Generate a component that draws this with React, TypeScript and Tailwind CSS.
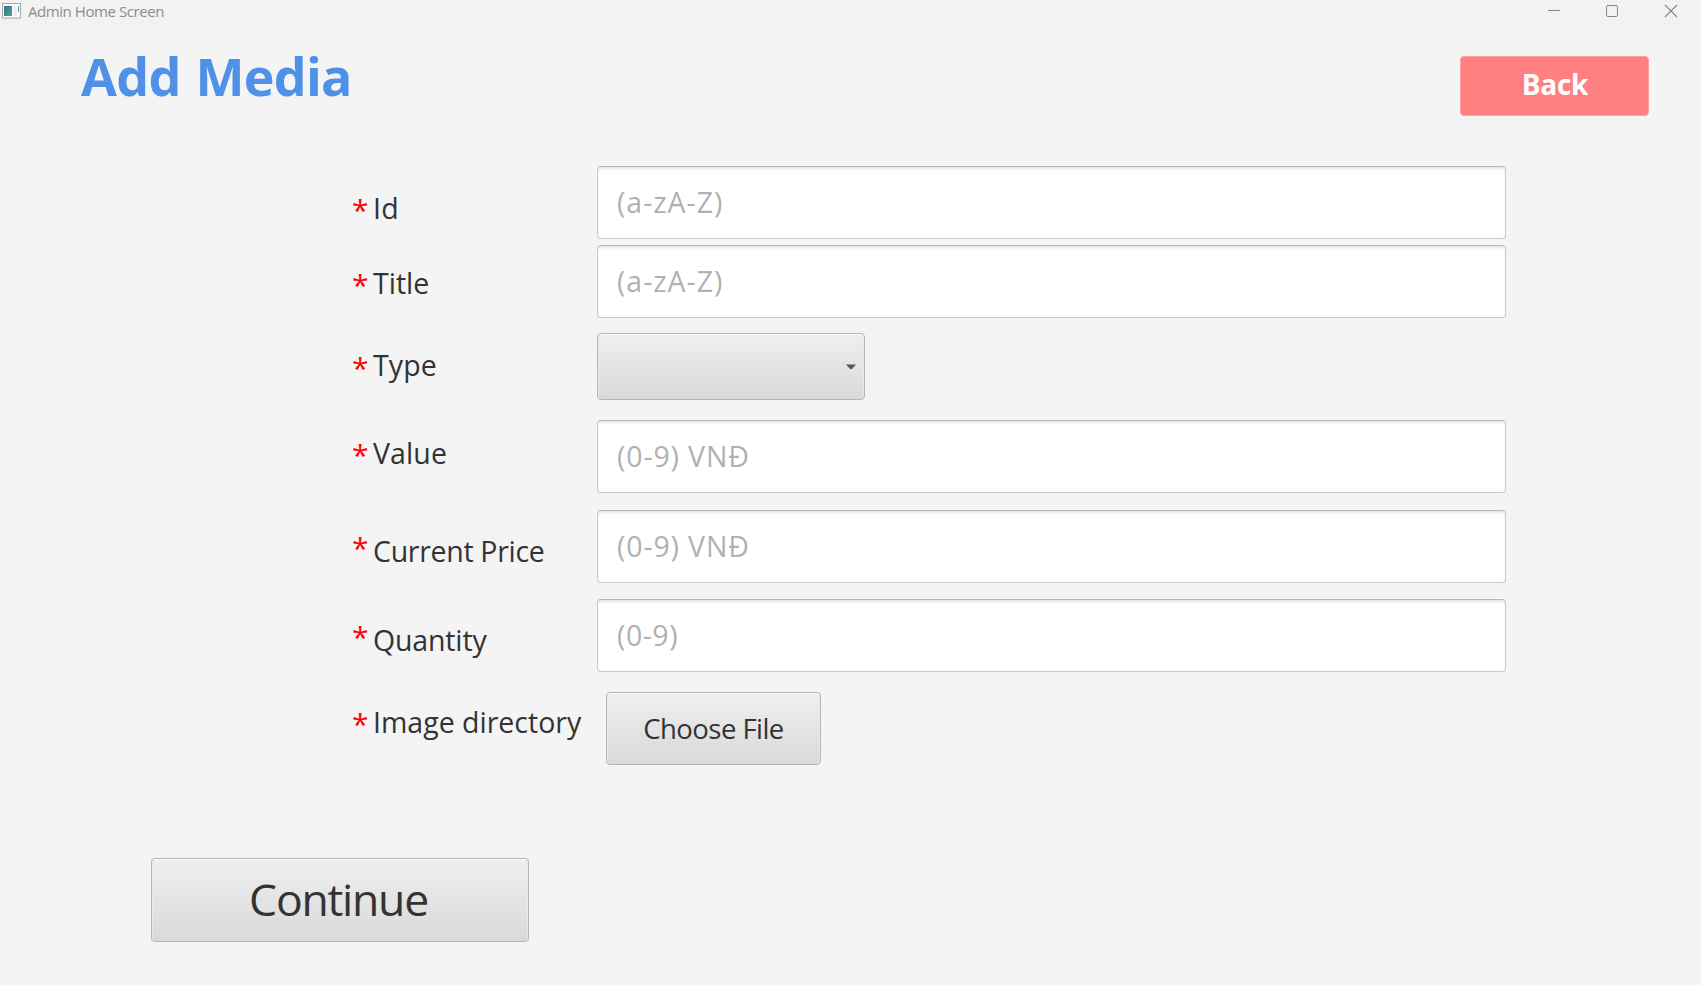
type Row = {
  label: string;
  placeholder?: string;
  kind: "text" | "select" | "file";
  row: string;
  star: string;
  text: string;
  hint?: string;
};

const rows: Row[] = [
  { label: "Id", placeholder: "(a-zA-Z)", kind: "text", row: "h-[79px]", star: "pt-[24px]", text: "pt-[22px] tracking-[0.2px]", hint: "tracking-[0.95px]" },
  { label: "Title", placeholder: "(a-zA-Z)", kind: "text", row: "h-[88px]", star: "pt-[20px]", text: "pt-[18px] tracking-[0px]", hint: "tracking-[0.95px]" },
  { label: "Type", kind: "select", row: "h-[87px]", star: "pt-[15px]", text: "pt-[12px] tracking-[0.1px]" },
  { label: "Value", placeholder: "(0-9) VNĐ", kind: "text", row: "h-[90px]", star: "pt-[15px]", text: "pt-[13px] tracking-[0.1px]", hint: "tracking-[0.85px]" },
  { label: "Current Price", placeholder: "(0-9) VNĐ", kind: "text", row: "h-[89px]", star: "pt-[18px]", text: "pt-[21px] tracking-[-0.3px]", hint: "tracking-[0.85px]" },
  { label: "Quantity", placeholder: "(0-9)", kind: "text", row: "h-[93px]", star: "pt-[18px]", text: "pt-[21px] tracking-[-0.15px]", hint: "tracking-[0.5px]" },
  { label: "Image directory", kind: "file", row: "h-[73px]", star: "pt-[12px]", text: "pt-[10px] tracking-[0px]" },
];

const buttonLook =
  "rounded-[4px] border border-[#b5b5b5] bg-linear-to-b from-[#efefef] to-[#d9d9d9] text-[#333333] shadow-[inset_0_1px_0_#fbfbfb,inset_1px_0_0_#e9e9e9,inset_-1px_0_0_#e9e9e9]";

function TitleBar() {
  return (
    <header className="flex h-[29px] shrink-0 items-start justify-between bg-[#f2f2f2]">
      <div className="flex items-start pl-[2px] pt-[2px]">
        <svg width="20" height="18" viewBox="0 0 20 18" className="mt-px">
          <defs>
            <linearGradient id="pane" x1="0" y1="0" x2="1" y2="1">
              <stop offset="0" stopColor="#2f6fa0" />
              <stop offset="1" stopColor="#55a86a" />
            </linearGradient>
          </defs>
          <rect x="0.5" y="0.5" width="18" height="14.5" fill="#fafafa" stroke="#a3a7ae" />
          <rect x="0" y="15" width="19" height="1" fill="#c9c9c9" />
          <rect x="2" y="3" width="8" height="10" fill="url(#pane)" />
          <rect x="11.5" y="3" width="3" height="10" fill="#ececf4" />
          <rect x="16" y="3" width="1" height="6" fill="#4f9aa0" />
        </svg>
        <span className="-mt-px ml-[6px] text-[15px] leading-[20px] tracking-[-0.43px] text-[#8c8c8c]">Admin Home Screen</span>
      </div>
      <svg width="160" height="22" viewBox="0 0 160 22" fill="none" stroke="#868686" strokeWidth="1">
        <path d="M7 10.5H19" />
        <rect x="65.5" y="5.5" width="11" height="11" rx="1.5" />
        <path d="M124 5L136 17M136 5L124 17" strokeWidth="1.1" />
      </svg>
    </header>
  );
}

function Field({ item }: { item: Row }) {
  if (item.kind === "select") {
    return (
      <button type="button" className={`flex h-[67px] w-[268px] items-center justify-end pr-[8px] ${buttonLook}`}>
        <svg width="10" height="6" viewBox="0 0 10 6">
          <path d="M0 0.5H10L6 5H4Z" fill="#575757" />
        </svg>
      </button>
    );
  }
  if (item.kind === "file") {
    return (
      <button type="button" className={`ml-[9px] h-[73px] w-[215px] pt-px text-[27.5px] leading-[40px] tracking-[-0.55px] ${buttonLook}`}>
        Choose File
      </button>
    );
  }
  return (
    <div className="flex h-[73px] w-[909px] items-center rounded-[4px] border border-[#c8c8c8] border-t-[#b7b7b7] bg-white pb-px pl-[19px] shadow-[inset_0_3px_3px_-1px_#e6e6e6]">
      <span className={`text-[28.5px] leading-[40px] text-[#b1b1b1] ${item.hint}`}>{item.placeholder}</span>
    </div>
  );
}

export default function App() {
  return (
    <div className="flex h-[985px] w-[1701px] flex-col overflow-hidden bg-[#f4f4f4] font-['Open_Sans',sans-serif] whitespace-nowrap">
      <TitleBar />
      <div className="flex h-[137px] shrink-0 items-start justify-between pl-[81px] pr-[52px]">
        <h1 className="pt-[15px] text-[52px] leading-[64px] font-bold tracking-[-0.7px] text-[#5091e8] [word-spacing:2px]">Add Media</h1>
        <button type="button" className="mt-[27px] h-[60px] w-[189px] rounded-[4px] border border-[#ffa0a0] bg-[#ff8080] pb-[4px] pl-px text-[28px] leading-[40px] font-bold tracking-[-0.3px] text-white">
          Back
        </button>
      </div>
      <form className="flex flex-col pl-[352px]">
        {rows.map((item) => (
          <div key={item.label} className={`flex items-start ${item.row}`}>
            <span className={`w-[21px] text-[30px] leading-[40px] text-[#ff0000] ${item.star}`}>*</span>
            <label className={`w-[224px] text-[28.5px] leading-[40px] text-[#333333] ${item.text}`}>{item.label}</label>
            <Field item={item} />
          </div>
        ))}
      </form>
      <div className="pl-[151px] pt-[93px]">
        <button type="button" className={`h-[84px] w-[378px] pr-[3px] pb-[2px] text-[44.5px] leading-[60px] tracking-[-1.25px] ${buttonLook}`}>Continue</button>
      </div>
    </div>
  );
}
